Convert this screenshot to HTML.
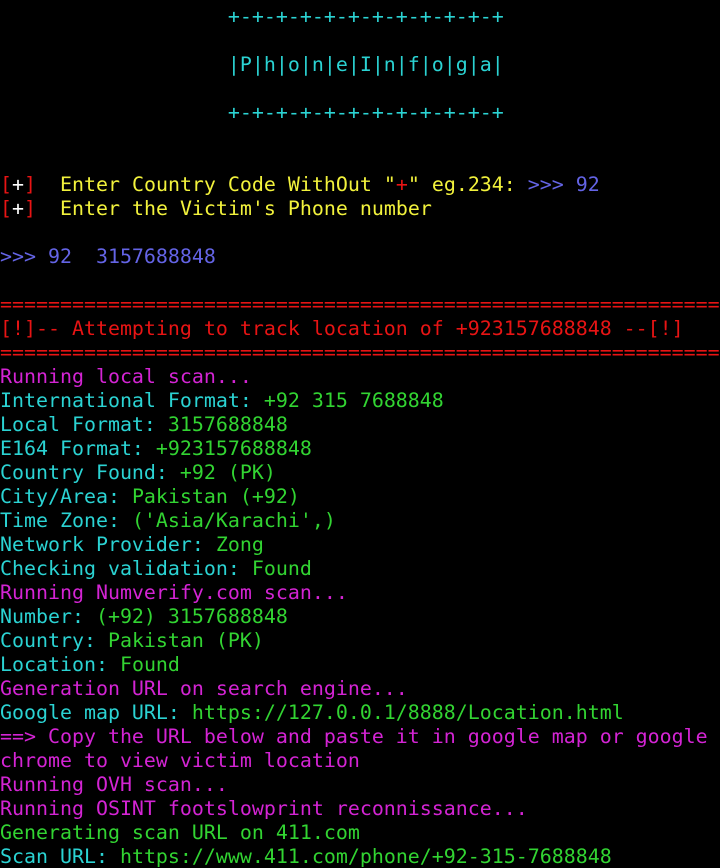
<!DOCTYPE html>
<html><head><meta charset="utf-8"><style>
html,body{margin:0;padding:0;background:#000;width:720px;height:868px;overflow:hidden}
pre{margin:0;padding:5px 0 0 0;font-family:"DejaVu Sans Mono","Liberation Mono",monospace;font-size:19.93px;line-height:24px;color:#2bd3d3;white-space:pre}
.c{color:#2bd3d3}.y{color:#f2f23c}.b{color:#6464e6}.r{color:#e81414}.w{color:#fff}.m{color:#d424d4}.g{color:#32d432}
</style></head><body><pre><span class="c">                   +-+-+-+-+-+-+-+-+-+-+-+</span>

<span class="c">                   |P|h|o|n|e|I|n|f|o|g|a|</span>

<span class="c">                   +-+-+-+-+-+-+-+-+-+-+-+</span>


<span class="r">[</span><span class="w">+</span><span class="r">]</span>  <span class="y">Enter Country Code WithOut "</span><span class="r">+</span><span class="y">" eg.234: </span><span class="b">&gt;&gt;&gt; 92</span>
<span class="r">[</span><span class="w">+</span><span class="r">]</span>  <span class="y">Enter the Victim's Phone number</span>

<span class="b">&gt;&gt;&gt; 92  3157688848</span>

<span class="r">============================================================</span>
<span class="r">[!]-- Attempting to track location of +923157688848 --[!]</span>
<span class="r">============================================================</span>
<span class="m">Running local scan...</span>
<span class="c">International Format: </span><span class="g">+92 315 7688848</span>
<span class="c">Local Format: </span><span class="g">3157688848</span>
<span class="c">E164 Format: </span><span class="g">+923157688848</span>
<span class="c">Country Found: </span><span class="g">+92 (PK)</span>
<span class="c">City/Area: </span><span class="g">Pakistan (+92)</span>
<span class="c">Time Zone: </span><span class="g">('Asia/Karachi',)</span>
<span class="c">Network Provider: </span><span class="g">Zong</span>
<span class="c">Checking validation: </span><span class="g">Found</span>
<span class="m">Running Numverify.com scan...</span>
<span class="c">Number: </span><span class="g">(+92) 3157688848</span>
<span class="c">Country: </span><span class="g">Pakistan (PK)</span>
<span class="c">Location: </span><span class="g">Found</span>
<span class="m">Generation URL on search engine...</span>
<span class="c">Google map URL: </span><span class="g">https://127.0.0.1/8888/Location.html</span>
<span class="m">==&gt; Copy the URL below and paste it in google map or google</span>
<span class="m">chrome to view victim location</span>
<span class="m">Running OVH scan...</span>
<span class="m">Running OSINT footslowprint reconnissance...</span>
<span class="g">Generating scan URL on 411.com</span>
<span class="c">Scan URL: </span><span class="g">https://www.411.com/phone/+92-315-7688848</span></pre></body></html>
